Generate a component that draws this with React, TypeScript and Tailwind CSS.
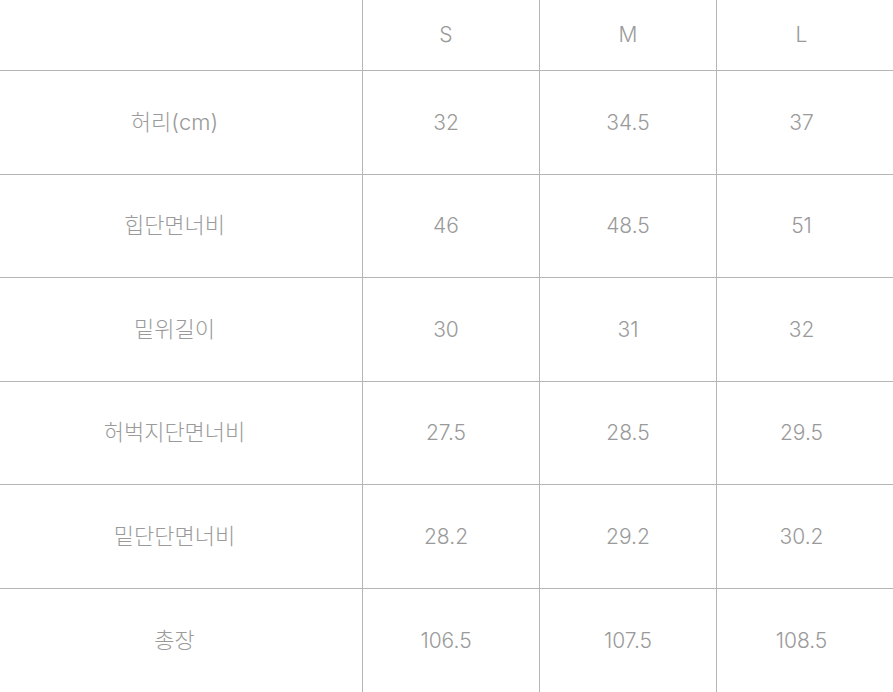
import React from "react";

const rows: [string, string, string, string][] = [
  ["허리(cm)", "32", "34.5", "37"],
  ["힙단면너비", "46", "48.5", "51"],
  ["밑위길이", "30", "31", "32"],
  ["허벅지단면너비", "27.5", "28.5", "29.5"],
  ["밑단단면너비", "28.2", "29.2", "30.2"],
  ["총장", "106.5", "107.5", "108.5"],
];

const colCls = [
  "pr-[13px] text-[22px]",
  "border-l pr-[10px]",
  "border-l",
  "border-l pr-[7px]",
];

export default function App() {
  const font = { fontFamily: '"Inter", "Noto Sans CJK KR", sans-serif' };
  return (
    <div className="w-[893px] h-[692px] overflow-hidden bg-white text-[#9a9a9a] text-[21px] font-light" style={font}>
      <div className="grid grid-cols-[362px_177px_177px_177px] grid-rows-[71px_repeat(6,103.5px)]">
        {["", "S", "M", "L"].map((h, i) => (
          <div
            key={"h" + i}
            className={`flex items-center justify-center border-b border-[#b5b5b5] ${colCls[i]}`}
          >
            {h}
          </div>
        ))}
        {rows.map((r, ri) =>
          r.map((c, ci) => (
            <div
              key={ri + "-" + ci}
              className={`flex items-center justify-center border-[#b5b5b5] ${ri < rows.length - 1 ? "border-b" : ""} ${colCls[ci]}`}
            >
              {c}
            </div>
          ))
        )}
      </div>
    </div>
  );
}
